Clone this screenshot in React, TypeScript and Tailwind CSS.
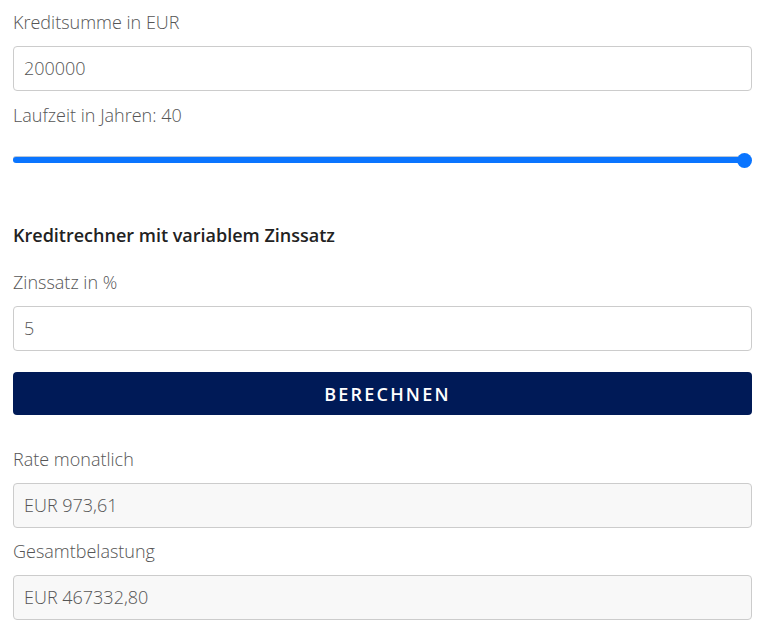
const fieldLabel = 'block text-[18px] leading-[27px] font-light text-[#555]';
const inputBox = 'flex h-[45px] w-full items-center rounded-[4px] border border-[#ccc] px-[10px] text-[18px] font-light text-[#555]';

function Field({ label, value, readOnly }: { label: string; value: string; readOnly?: boolean }) {
  return (
    <div>
      <label className={`${fieldLabel} mb-[10px]`}>{label}</label>
      <div className={`${inputBox} ${readOnly ? 'bg-[#f8f8f8]' : 'bg-white'}`}>{value}</div>
    </div>
  );
}

export default function App() {
  return (
    <div className="min-h-[625px] bg-white font-['Open_Sans',sans-serif]">
      <div className="ml-[13px] w-[739px] pt-[9px]">
        {/* Kreditsumme */}
        <Field label="Kreditsumme in EUR" value="200000" />

        {/* Laufzeit slider */}
        <label className={`${fieldLabel} mt-[11px]`}>Laufzeit in Jahren: 40</label>
        <div className="relative mt-[24px] h-[15px] w-full">
          <div className="absolute left-0 right-[1px] top-[4px] h-[6px] rounded-full bg-[#0a75ff] shadow-[0_-1px_0_#b9c6d6]" />
          <div className="absolute right-0 top-0 h-[15px] w-[15px] rounded-full bg-[#0a75ff]" />
        </div>

        {/* Variabler Zinssatz */}
        <h2 className="mt-[55px] text-[18px] leading-[24px] font-semibold text-[#222]">
          Kreditrechner mit variablem Zinssatz
        </h2>
        <div className="mt-[22px]">
          <Field label="Zinssatz in %" value="5" />
        </div>

        <button className="mt-[21px] flex h-[43px] w-full items-center justify-center rounded-[4px] bg-[#001a57] pl-[10px] pt-[2px] text-[18px] font-semibold tracking-[2.2px] text-white">
          BERECHNEN
        </button>

        <div className="mt-[31px]">
          <Field label="Rate monatlich" value="EUR 973,61" readOnly />
        </div>
        <div className="mt-[10px]">
          <Field label="Gesamtbelastung" value="EUR 467332,80" readOnly />
        </div>
      </div>
    </div>
  );
}
